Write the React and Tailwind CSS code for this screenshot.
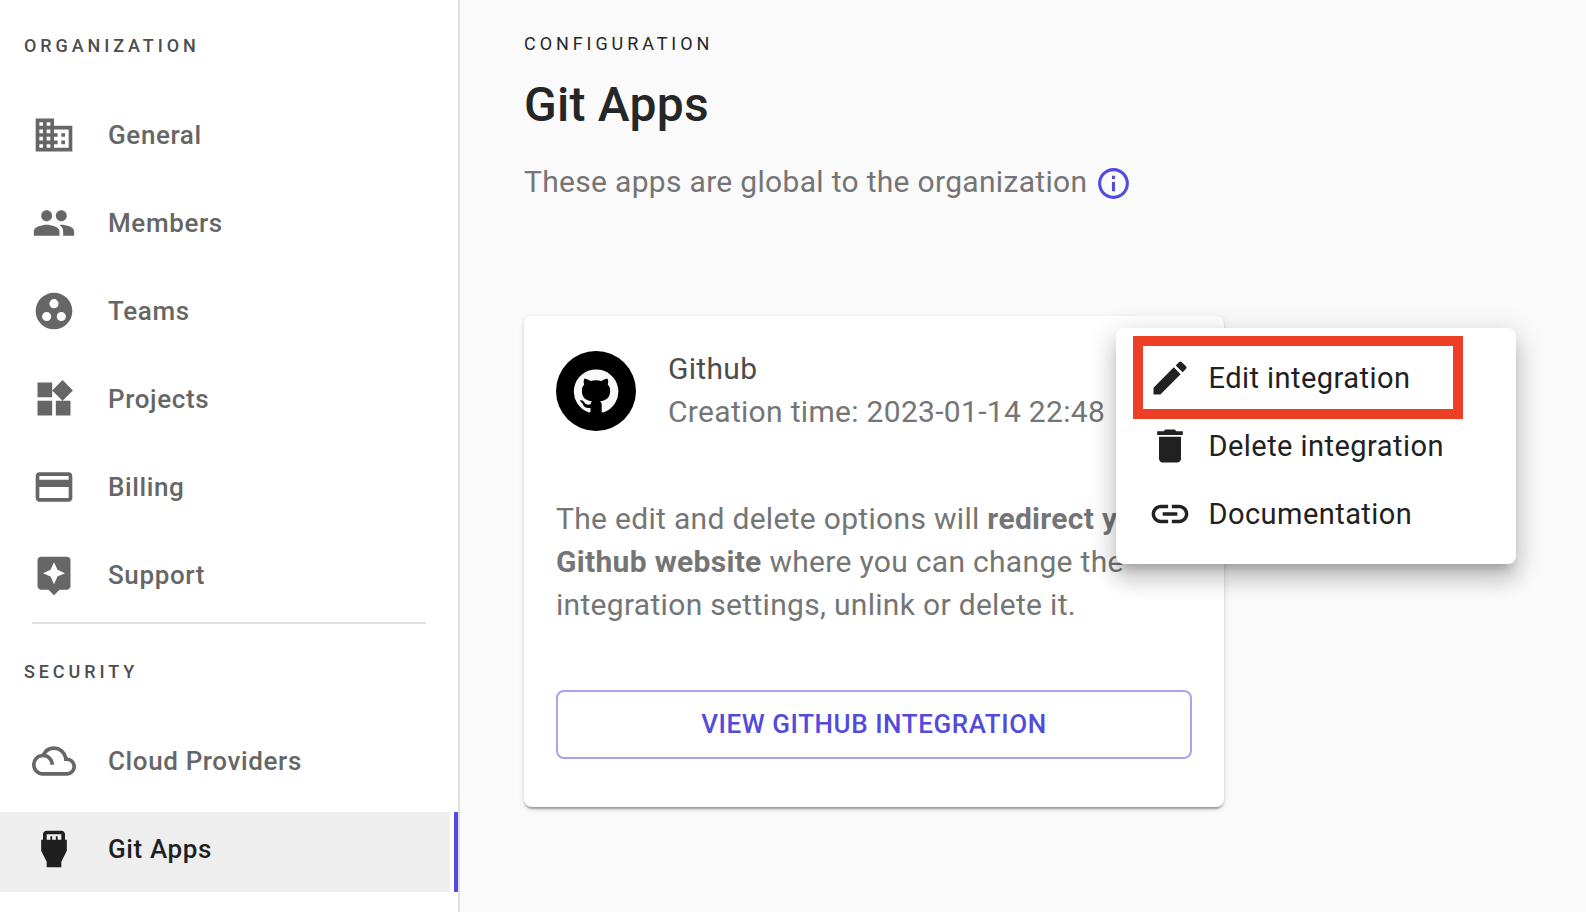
import {
  MdBusiness,
  MdPeople,
  MdGroupWork,
  MdWidgets,
  MdPayment,
  MdAssistant,
  MdFilterDrama,
  MdSettingsInputHdmi,
  MdCreate,
  MdDelete,
  MdInsertLink,
  MdInfoOutline,
} from "react-icons/md";

const organization = [
  { label: "General", Icon: MdBusiness },
  { label: "Members", Icon: MdPeople },
  { label: "Teams", Icon: MdGroupWork },
  { label: "Projects", Icon: MdWidgets },
  { label: "Billing", Icon: MdPayment },
  { label: "Support", Icon: MdAssistant },
];

const security = [
  { label: "Cloud Providers", Icon: MdFilterDrama },
  { label: "Git Apps", Icon: MdSettingsInputHdmi, active: true },
];

const actions = [
  { label: "Edit integration", Icon: MdCreate, highlighted: true },
  { label: "Delete integration", Icon: MdDelete },
  { label: "Documentation", Icon: MdInsertLink },
];

function SectionLabel({ children }) {
  return (
    <h2 className="pl-6 text-[18px] leading-6 font-medium tracking-[3.9px] text-[#4d4d4d]">
      {children}
    </h2>
  );
}

function NavItem({ label, Icon, active }) {
  return (
    <li className="flex h-20 justify-between">
      <a
        className={
          active
            ? "flex w-[450px] items-center bg-[#eeeeee] pb-1.5 pl-8 text-[#1f1f1f]"
            : "flex w-[450px] items-center pb-1.5 pl-8 text-[#666666]"
        }
      >
        <Icon className="size-11 shrink-0" />
        <span className="ml-8 text-[26px] leading-10 font-medium tracking-[0.62px]">{label}</span>
      </a>
      {active && <span className="w-1 bg-[#534bdb]" />}
    </li>
  );
}

function GithubMark() {
  return (
    <svg viewBox="0 0 24 24" className="size-12" fill="currentColor">
      <path d="M12 1.27a11 11 0 00-3.48 21.46c.55.09.73-.28.73-.55v-1.84c-3.03.64-3.67-1.46-3.67-1.46-.55-1.29-1.28-1.65-1.28-1.65-.92-.65.1-.65.1-.65 1.1 0 1.73 1.1 1.73 1.1.92 1.65 2.57 1.2 3.21.92a2 2 0 01.64-1.47c-2.47-.27-5.04-1.19-5.04-5.5 0-1.1.46-2.1 1.2-2.84a3.76 3.76 0 010-2.93s.91-.28 3.11 1.1c1.8-.49 3.7-.49 5.5 0 2.1-1.38 3.02-1.1 3.02-1.1a3.76 3.76 0 01.1 2.93c.83.74 1.2 1.74 1.2 2.94 0 4.21-2.57 5.13-5.04 5.4.45.37.82.92.82 2.02v3.03c0 .27.1.64.73.55A11 11 0 0012 1.27" />
    </svg>
  );
}

function ActionsMenu() {
  return (
    <div className="absolute top-3 left-[592px] h-[236px] w-[400px] rounded-lg bg-white pt-4 shadow-[0_10px_10px_-6px_rgba(0,0,0,0.2),0_16px_20px_2px_rgba(0,0,0,0.14),0_6px_28px_4px_rgba(0,0,0,0.12)]">
      <ul>
        {actions.map(({ label, Icon, highlighted }) => (
          <li key={label} className="relative flex h-[68px] items-center pl-8 text-[#212121]">
            <Icon className="size-11 shrink-0" />
            <span className="ml-[16.5px] text-[29px] leading-10 tracking-[0.45px]">{label}</span>
            {highlighted && (
              <span className="absolute -top-2 left-[17px] h-[83px] w-[330px] border-[10px] border-[#ec3f26]" />
            )}
          </li>
        ))}
      </ul>
    </div>
  );
}

function IntegrationCard() {
  return (
    <section className="relative mt-[111px] h-[491px] w-[700px] rounded-lg bg-white px-8 pt-[31px] text-[30px] leading-[43px] tracking-[0.31px] text-[#757575] shadow-[0_4px_2px_-2px_rgba(0,0,0,0.2),0_2px_2px_0_rgba(0,0,0,0.14),0_2px_6px_0_rgba(0,0,0,0.12)]">
      <div className="flex gap-8">
        <div className="mt-1 flex size-20 items-center justify-center rounded-full bg-black text-[#fafafa]">
          <GithubMark />
        </div>
        <div>
          <h3 className="text-[#4d4d4d]">Github</h3>
          <p className="whitespace-nowrap">Creation time: 2023-01-14 22:48</p>
        </div>
      </div>
      <p className="mt-16 whitespace-nowrap">
        The edit and delete options will <b className="font-bold">redirect you to</b>
        <br />
        <b className="font-bold">Github website</b> where you can change the
        <br />
        integration settings, unlink or delete it.
      </p>
      <button className="mt-[64px] flex h-[69px] w-full items-center justify-center rounded-lg border-2 border-[#a9a3ef] pb-0.5 text-[26px] leading-10 font-medium tracking-[0.57px] text-[#534bdb]">
        VIEW GITHUB INTEGRATION
      </button>
      <ActionsMenu />
    </section>
  );
}

export default function App() {
  return (
    <div className="flex h-[912px] w-[1586px] overflow-hidden bg-[#fafafa] font-[Roboto,sans-serif]">
      <aside className="w-[460px] shrink-0 border-r-2 border-[#e0e0e0] bg-white pt-[34px]">
        <SectionLabel>ORGANIZATION</SectionLabel>
        <ul className="mt-10 flex flex-col gap-2">
          {organization.map((item) => (
            <NavItem key={item.label} {...item} />
          ))}
        </ul>
        <hr className="mt-1 mr-8 ml-8 border-t-2 border-[#e0e0e0]" />
        <div className="mt-9">
          <SectionLabel>SECURITY</SectionLabel>
        </div>
        <ul className="mt-10 flex flex-col gap-2">
          {security.map((item) => (
            <NavItem key={item.label} {...item} />
          ))}
        </ul>
      </aside>
      <main className="pt-8 pl-16">
        <p className="text-[18px] leading-6 tracking-[3.92px] text-[#262626]">CONFIGURATION</p>
        <h1 className="mt-[17px] text-[48px] leading-[64px] font-medium tracking-[0.25px] text-[#262626]">
          Git Apps
        </h1>
        <div className="mt-6 flex h-11 items-center gap-2">
          <p className="pb-[3px] text-[30px] leading-[43px] tracking-[0.31px] text-[#757575]">
            These apps are global to the organization
          </p>
          <MdInfoOutline className="size-[37px] text-[#534bdb]" />
        </div>
        <IntegrationCard />
      </main>
    </div>
  );
}
